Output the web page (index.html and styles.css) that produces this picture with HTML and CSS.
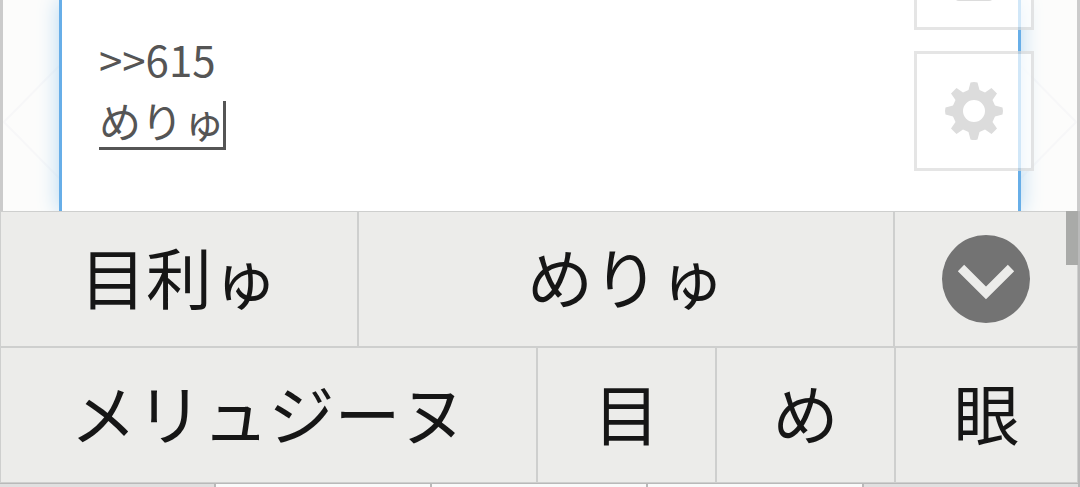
FILE: index.html
```html
<!DOCTYPE html>
<html lang="ja">
<head>
<meta charset="utf-8">
<meta name="viewport" content="width=device-width, initial-scale=1">
<title>めりゅ</title>
<link rel="stylesheet" href="styles.css">
</head>
<body>
<main class="page">
  <svg class="pattern" viewBox="0 0 56 114" aria-hidden="true"><path d="M56 1 1 57l55 56"/></svg>
  <div class="editor">
    <textarea class="editor-text" aria-label="本文" spellcheck="false">&gt;&gt;615
めりゅ</textarea>
    <span class="composition" aria-hidden="true"></span>
  </div>
  <svg class="pattern" viewBox="0 0 56 114" aria-hidden="true"><path d="m0 1 55 56L0 113"/></svg>
  <div class="tools">
    <button class="tool" aria-label="メニュー">
      <svg viewBox="0 0 58 58" aria-hidden="true"><rect x="10" y="34" width="38" height="26" rx="4"/></svg>
    </button>
    <button class="tool" aria-label="設定">
      <svg viewBox="0 0 58 58" aria-hidden="true"><path fill-rule="evenodd" d="M25.500.5Q29-.5 32.500.5L34.500 8 40 10.500 46.500 6 52 11.500 47.500 18 50 23.500 57.500 25.500Q58.500 29 57.500 32.500L50 34.500 47.500 40 52 46.500 46.500 52 40 47.500 34.500 50 32.500 57.500Q29 58.500 25.500 57.500L23.500 50 18 47.500 11.500 52 6 46.500 10.500 40 8 34.500.5 32.500Q-.5 29 .5 25.500L8 23.500 10.500 18 6 11.500 11.500 6 18 10.500 23.500 8ZM29 18a11 11 0 1 0 0 22a11 11 0 1 0 0-22Z"/></svg>
    </button>
  </div>
</main>
<section class="keyboard">
  <div class="candidates">
    <div class="row row-first">
      <button class="candidate">目利ゅ</button>
      <button class="candidate">めりゅ</button>
      <button class="candidate candidate-expand" aria-label="候補を開く">
        <svg class="expand" viewBox="0 0 88 88" aria-hidden="true"><circle cx="44" cy="44" r="44"/><path d="m19 33 25 25 25-25"/></svg>
      </button>
    </div>
    <div class="row row-second">
      <button class="candidate">メリュジーヌ</button>
      <button class="candidate">目</button>
      <button class="candidate">め</button>
      <button class="candidate">眼</button>
    </div>
    <span class="scroll-thumb"></span>
  </div>
  <div class="keys">
    <span class="key key-side"></span>
    <span class="key"></span>
    <span class="key"></span>
    <span class="key"></span>
    <span class="key key-side"></span>
  </div>
</section>
</body>
</html>
```
FILE: styles.css
```css
* {
  box-sizing: border-box;
}

body {
  margin: 0;
  height: 100vh;
  display: flex;
  flex-direction: column;
  overflow: hidden;
  font-family: "Noto Sans CJK JP", sans-serif;
}

button {
  margin: 0;
  padding: 0;
  font: inherit;
  color: inherit;
}

.page {
  position: relative;
  flex: 1;
  min-height: 0;
  display: flex;
  align-items: flex-start;
  border: solid #cbcbcb;
  border-width: 0 3px;
  background: #fcfcfb;
}

.pattern {
  width: 56px;
  height: 114px;
  margin-top: 65px;
  fill: none;
  stroke: #f7f7f8;
  stroke-width: 2;
}

.editor {
  position: relative;
  flex: 1;
  align-self: stretch;
  padding: 28px 36px 0 37px;
  border: solid #67aee8;
  border-width: 0 3px;
  background: #fff;
  box-shadow: 0 0 20px #b4d8f3;
  clip-path: inset(0 -30px);
}

.editor-text {
  display: block;
  width: 100%;
  height: 124px;
  padding: 0;
  border: 0;
  outline: 0;
  resize: none;
  overflow: hidden;
  background: none;
  color: #555;
  font: 400 42px/61px "Noto Sans CJK JP", sans-serif;
}

.composition {
  position: absolute;
  top: 101px;
  left: 37px;
  width: 127px;
  height: 49px;
  border: solid #555;
  border-width: 0 3px 3px 0;
}

.tools {
  position: absolute;
  right: 43px;
  bottom: 40px;
  display: grid;
  gap: 21px;
}

.tool {
  display: grid;
  place-items: center;
  width: 120px;
  height: 120px;
  border: 3px solid rgba(218, 218, 218, 0.7);
  background: rgba(255, 255, 255, 0.7);
  background-clip: padding-box;
}

.tool svg {
  width: 58px;
  height: 58px;
  overflow: visible;
  fill: #dcdcdc;
}

.keyboard {
  background: #b9b9b9;
}

.candidates {
  position: relative;
  display: grid;
  gap: 2px;
  margin-right: 2px;
  padding: 1px;
  background: #cecfce;
}

.row {
  display: grid;
  gap: 2px;
}

.row-first {
  grid-template-columns: 356fr 534fr 182fr;
}

.row-second {
  grid-template-columns: 535fr 177fr 177fr 181fr;
}

.candidate {
  display: grid;
  place-items: center;
  height: 134px;
  padding-bottom: 8px;
  border: 0;
  background: #ececea;
  color: #161616;
  font-size: 66px;
  line-height: 96px;
  white-space: nowrap;
}

.candidate-expand {
  padding-bottom: 0;
}

.expand {
  width: 88px;
  height: 88px;
  fill: #737373;
}

.expand path {
  fill: none;
  stroke: #ececea;
  stroke-width: 9;
}

.scroll-thumb {
  position: absolute;
  top: 0;
  right: 0;
  width: 12px;
  height: 54px;
  background: #a9aaa8;
}

.keys {
  display: grid;
  grid-template-columns: repeat(5, 1fr);
  height: 4px;
  padding-top: 1px;
}

.key {
  border-right: 2px solid #b9b9b9;
  background: #fafafa;
}

.key-side {
  background: #e0e0e0;
}
```
